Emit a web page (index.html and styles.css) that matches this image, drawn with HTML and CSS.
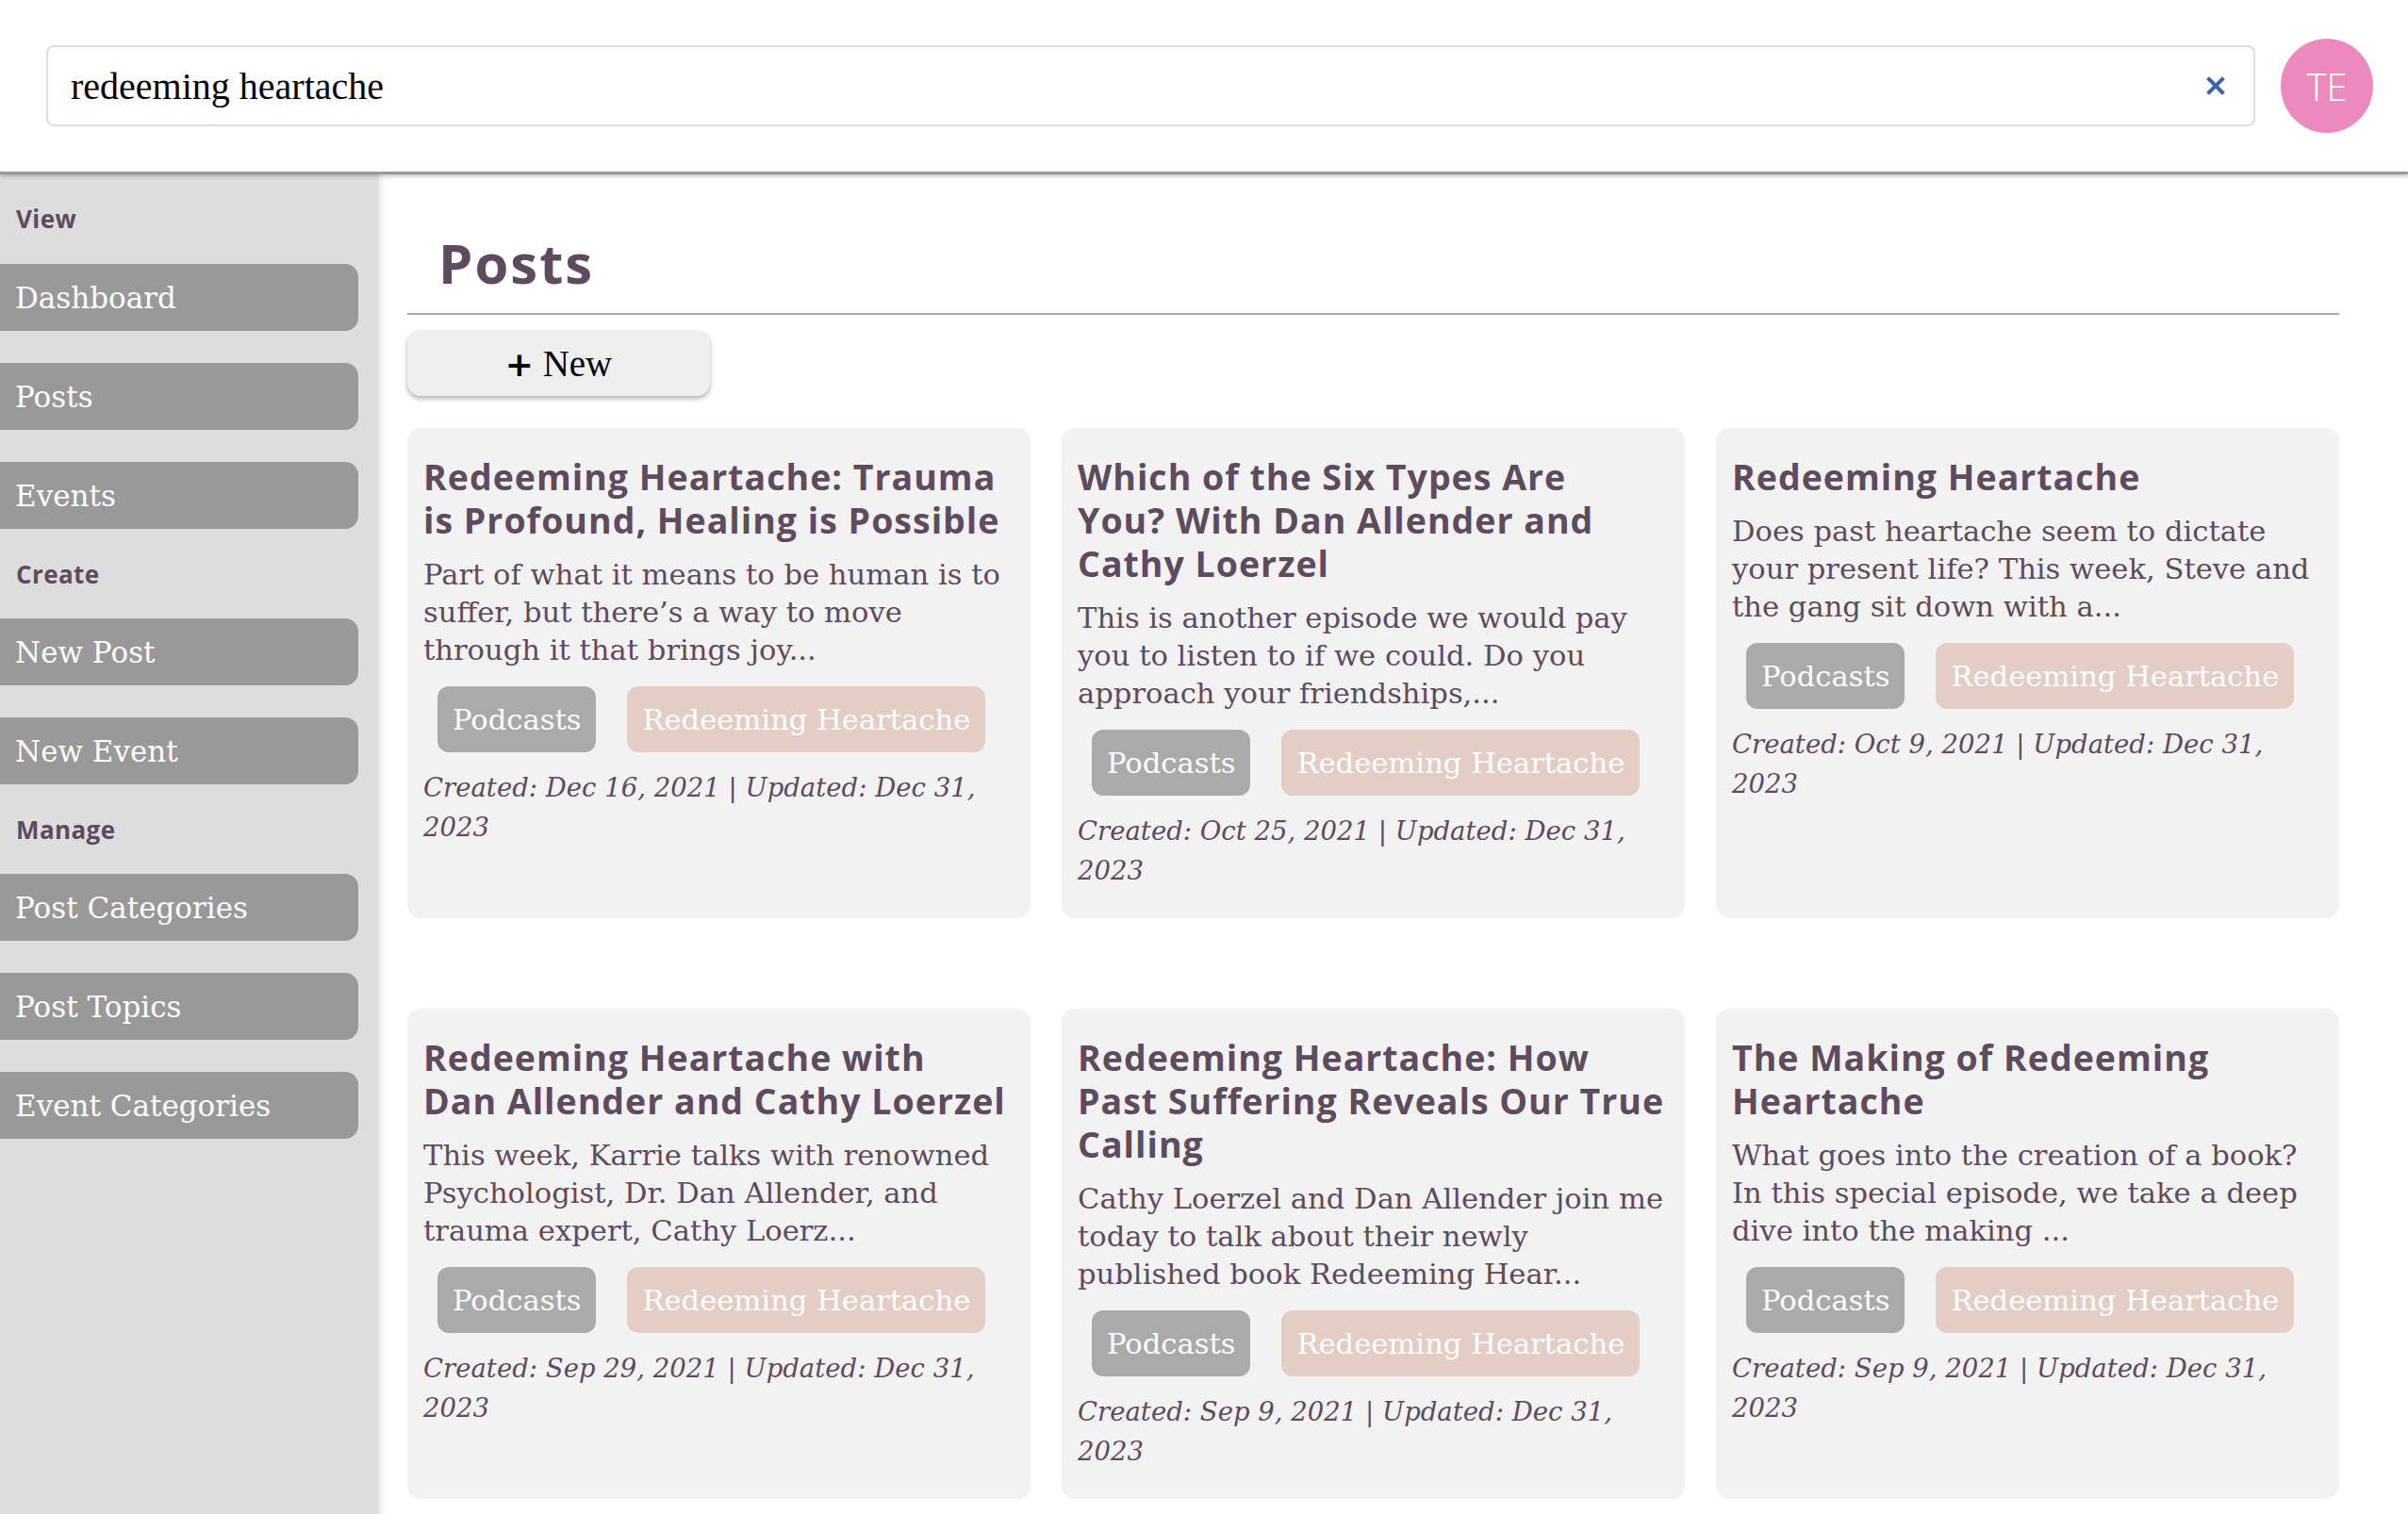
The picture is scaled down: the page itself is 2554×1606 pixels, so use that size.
FILE: index.html
```html
<!DOCTYPE html>
<html lang="en">
<head>
<meta charset="utf-8">
<title>Posts</title>
<link rel="stylesheet" href="styles.css">
</head>
<body>
<header class="topbar">
  <div class="search">
    <span class="search-text">redeeming heartache</span>
    <span class="clear" aria-label="clear">
      <svg width="20" height="20" viewBox="0 0 20 20"><path d="M3 3 L17 17 M17 3 L3 17" stroke="#3d62a6" stroke-width="4" stroke-linecap="square" fill="none"/></svg>
    </span>
  </div>
  <div class="avatar">TE</div>
</header>
<div class="layout">
  <aside class="sidebar">
    <div class="section-label">View</div>
    <a class="nav-btn">Dashboard</a>
    <a class="nav-btn">Posts</a>
    <a class="nav-btn">Events</a>
    <div class="section-label">Create</div>
    <a class="nav-btn">New Post</a>
    <a class="nav-btn">New Event</a>
    <div class="section-label">Manage</div>
    <a class="nav-btn">Post Categories</a>
    <a class="nav-btn">Post Topics</a>
    <a class="nav-btn">Event Categories</a>
  </aside>
  <main class="content">
    <h1 class="page-title">Posts</h1>
    <hr class="rule">
    <button class="new-btn"><span class="plus">+</span> New</button>
    <div class="grid">
      <article class="card">
        <h3 class="card-title">Redeeming Heartache: Trauma<br>is Profound, Healing is Possible</h3>
        <p class="card-desc">Part of what it means to be human is to suffer, but there’s a way to move through it that brings joy...</p>
        <div class="chips"><span class="chip chip-cat">Podcasts</span><span class="chip chip-topic">Redeeming Heartache</span></div>
        <p class="card-date">Created: Dec 16, 2021 | Updated: Dec 31, 2023</p>
      </article>
      <article class="card">
        <h3 class="card-title">Which of the Six Types Are<br>You? With Dan Allender and<br>Cathy Loerzel</h3>
        <p class="card-desc">This is another episode we would pay you to listen to if we could. Do you approach your friendships,...</p>
        <div class="chips"><span class="chip chip-cat">Podcasts</span><span class="chip chip-topic">Redeeming Heartache</span></div>
        <p class="card-date">Created: Oct 25, 2021 | Updated: Dec 31, 2023</p>
      </article>
      <article class="card">
        <h3 class="card-title">Redeeming Heartache</h3>
        <p class="card-desc">Does past heartache seem to dictate your present life? This week, Steve and the gang sit down with a...</p>
        <div class="chips"><span class="chip chip-cat">Podcasts</span><span class="chip chip-topic">Redeeming Heartache</span></div>
        <p class="card-date">Created: Oct 9, 2021 | Updated: Dec 31, 2023</p>
      </article>
      <article class="card">
        <h3 class="card-title">Redeeming Heartache with<br>Dan Allender and Cathy Loerzel</h3>
        <p class="card-desc">This week, Karrie talks with renowned Psychologist, Dr. Dan Allender, and trauma expert, Cathy Loerz...</p>
        <div class="chips"><span class="chip chip-cat">Podcasts</span><span class="chip chip-topic">Redeeming Heartache</span></div>
        <p class="card-date">Created: Sep 29, 2021 | Updated: Dec 31, 2023</p>
      </article>
      <article class="card">
        <h3 class="card-title">Redeeming Heartache: How<br>Past Suffering Reveals Our True<br>Calling</h3>
        <p class="card-desc">Cathy Loerzel and Dan Allender join me today to talk about their newly published book Redeeming Hear...</p>
        <div class="chips"><span class="chip chip-cat">Podcasts</span><span class="chip chip-topic">Redeeming Heartache</span></div>
        <p class="card-date">Created: Sep 9, 2021 | Updated: Dec 31, 2023</p>
      </article>
      <article class="card">
        <h3 class="card-title">The Making of Redeeming<br>Heartache</h3>
        <p class="card-desc">What goes into the creation of a book? In this special episode, we take a deep dive into the making ...</p>
        <div class="chips"><span class="chip chip-cat">Podcasts</span><span class="chip chip-topic">Redeeming Heartache</span></div>
        <p class="card-date">Created: Sep 9, 2021 | Updated: Dec 31, 2023</p>
      </article>
    </div>
  </main>
</div>
</body>
</html>
```
FILE: styles.css
```css
* { box-sizing: border-box; }
html, body { margin: 0; padding: 0; background: #fff; }
body { font-family: "DejaVu Serif", serif; color: #5e4b5d; }

.topbar {
  height: 185px;
  display: flex;
  align-items: center;
  gap: 27px;
  padding: 0 37px 0 49px;
  background: #fff;
  border-bottom: 3px solid #9a9a9a;
  box-shadow: 0 2px 4px rgba(0,0,0,0.25);
  position: relative;
  z-index: 2;
}
.search {
  flex: 1;
  height: 86px;
  border: 2px solid #dedede;
  border-radius: 8px;
  display: flex;
  align-items: center;
  padding: 0 30px 0 24px;
}
.search-text {
  flex: 1;
  font-family: "Liberation Serif", serif;
  font-size: 40px;
  color: #000;
}
.clear { display: flex; align-items: center; }
.avatar {
  width: 98px;
  height: 100px;
  border-radius: 50%;
  background: #ec8abe;
  color: #fff;
  font-family: "Open Sans", sans-serif;
  font-weight: 300;
  font-size: 40px;
  display: flex;
  align-items: center;
  justify-content: center;
}

.layout { display: flex; min-height: calc(100vh - 185px); }

.sidebar {
  width: 401px;
  flex: none;
  display: flex;
  flex-direction: column;
  align-items: flex-start;
  background: #dddddd;
  padding-top: 16px;
  box-shadow: 3px 0 6px rgba(0,0,0,0.12);
}
.section-label {
  height: 61px;
  display: flex;
  align-items: center;
  padding-left: 17px;
  font-family: "Open Sans", sans-serif;
  font-weight: 700;
  font-size: 26px;
  letter-spacing: 0.4px;
  color: #5e4b5d;
}
.nav-btn {
  display: flex;
  align-items: center;
  width: 380px;
  height: 71px;
  margin: 17px 0;
  padding-left: 16px;
  background: #999999;
  border-radius: 0 14px 14px 0;
  color: #fff;
  font-family: "DejaVu Serif", serif;
  font-size: 31px;
}
.nav-btn:first-of-type { margin-top: 18px; }

.content {
  flex: 1;
  padding: 0 73px 40px 31px;
}
.page-title {
  margin: 60px 0 0;
  padding-left: 33px;
  font-family: "Open Sans", sans-serif;
  font-weight: 700;
  font-size: 58px;
  letter-spacing: 2px;
  line-height: 68px;
  color: #5e4b5d;
}
.rule {
  margin: 19px 0 0;
  border: 0;
  border-top: 2px solid #aaaaaa;
}
.new-btn {
  margin-top: 16px;
  width: 321px;
  height: 70px;
  border: 0;
  border-radius: 14px;
  background: #efefef;
  box-shadow: 0 3px 5px rgba(0,0,0,0.3);
  font-family: "Liberation Serif", serif;
  font-size: 39px;
  color: #000;
}
.plus { font-family: "DejaVu Sans", sans-serif; font-weight: 700; font-size: 36px; }
.grid {
  margin-top: 34px;
  display: grid;
  grid-template-columns: repeat(3, 1fr);
  column-gap: 33px;
  row-gap: 96px;
}
.card {
  background: #f2f2f2;
  border-radius: 14px;
  padding: 29px 17px 30px;
}
.card-title {
  margin: 0 0 15px;
  font-family: "Open Sans", sans-serif;
  font-weight: 700;
  font-size: 37.5px;
  letter-spacing: 1px;
  line-height: 46px;
  white-space: nowrap;
  color: #5e4b5d;
}
.card-desc {
  margin: 0;
  font-size: 30.6px;
  line-height: 40px;
}
.chips { display: flex; flex-wrap: wrap; }
.chip {
  display: inline-flex;
  align-items: center;
  height: 70px;
  padding: 0 16px;
  margin: 18px 17px 16px 15px;
  border-radius: 12px;
  color: #fff;
  font-size: 30.6px;
}
.chip + .chip { margin-left: 16px; }
.chip-cat { background: #aaaaaa; }
.chip-topic { background: #e3cdc4; }
.card-date {
  margin: 0;
  font-style: italic;
  font-size: 27.5px;
  line-height: 42px;
}
```
